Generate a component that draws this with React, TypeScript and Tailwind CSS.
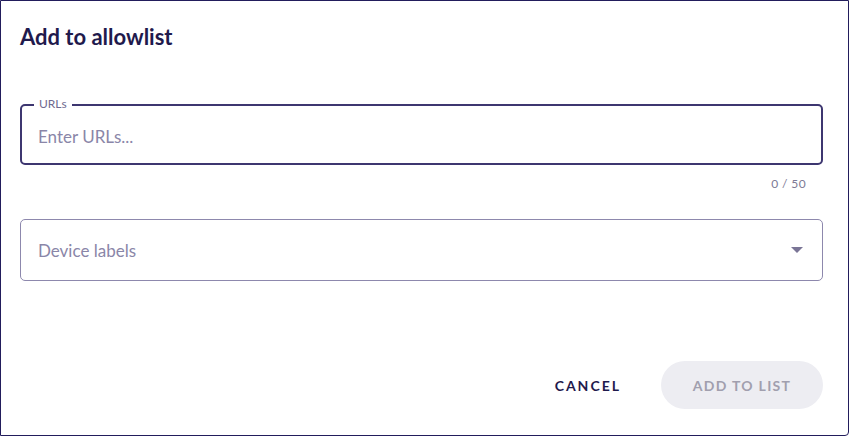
export default function App() {
  return (
    <div
      className="w-[849px] h-[436px] bg-white border border-[#221d5c] rounded-br-[4px] flex flex-col text-[#1f1a4d]"
      style={{ fontFamily: '"Source Sans Pro", Lato, "Noto Sans", sans-serif' }}
    >
      <h2 className="pl-[19px] pt-[22px] text-[22px] font-bold leading-[28px]">
        Add to allowlist
      </h2>

      <div className="pl-[19px] pr-[25px] mt-[53px]">
        <div className="relative h-[61px] border-2 border-[#3d3670] rounded-[5px] flex items-center">
          <span className="absolute -top-[8px] left-[12px] bg-white px-[5px] text-[12px] leading-[12px] text-[#6f6a90]">
            URLs
          </span>
          <input
            className="w-full h-full outline-none text-[17px] pl-[16px] pt-[3px] placeholder:text-[#8a86a8] bg-transparent"
            placeholder="Enter URLs..."
          />
        </div>
        <div className="text-right pr-[17px] mt-[12px] text-[12px] leading-[14px] text-[#7d7a95] tracking-[0.4px]">
          0 / 50
        </div>

        <div className="mt-[28px] h-[62px] border border-[#8d88ad] rounded-[5px] flex items-center justify-between pl-[17px] pr-[19px]">
          <span className="text-[17px] text-[#8a86a8] pt-[2px]">Device labels</span>
          <svg width="12" height="6" viewBox="0 0 12 6" className="text-[#7a7596]">
            <path d="M0 0h12L6 6z" fill="currentColor" />
          </svg>
        </div>
      </div>

      <div className="mt-auto mb-[26px] px-[25px] flex justify-end items-center gap-[40px]">
        <button className="text-[14px] font-bold tracking-[2px] text-[#1f1a4d]">CANCEL</button>
        <button
          disabled
          className="w-[162px] h-[48px] rounded-full bg-[#ededf2] text-[14px] font-bold tracking-[1.3px] text-[#a19fae]"
        >
          ADD TO LIST
        </button>
      </div>
    </div>
  );
}
